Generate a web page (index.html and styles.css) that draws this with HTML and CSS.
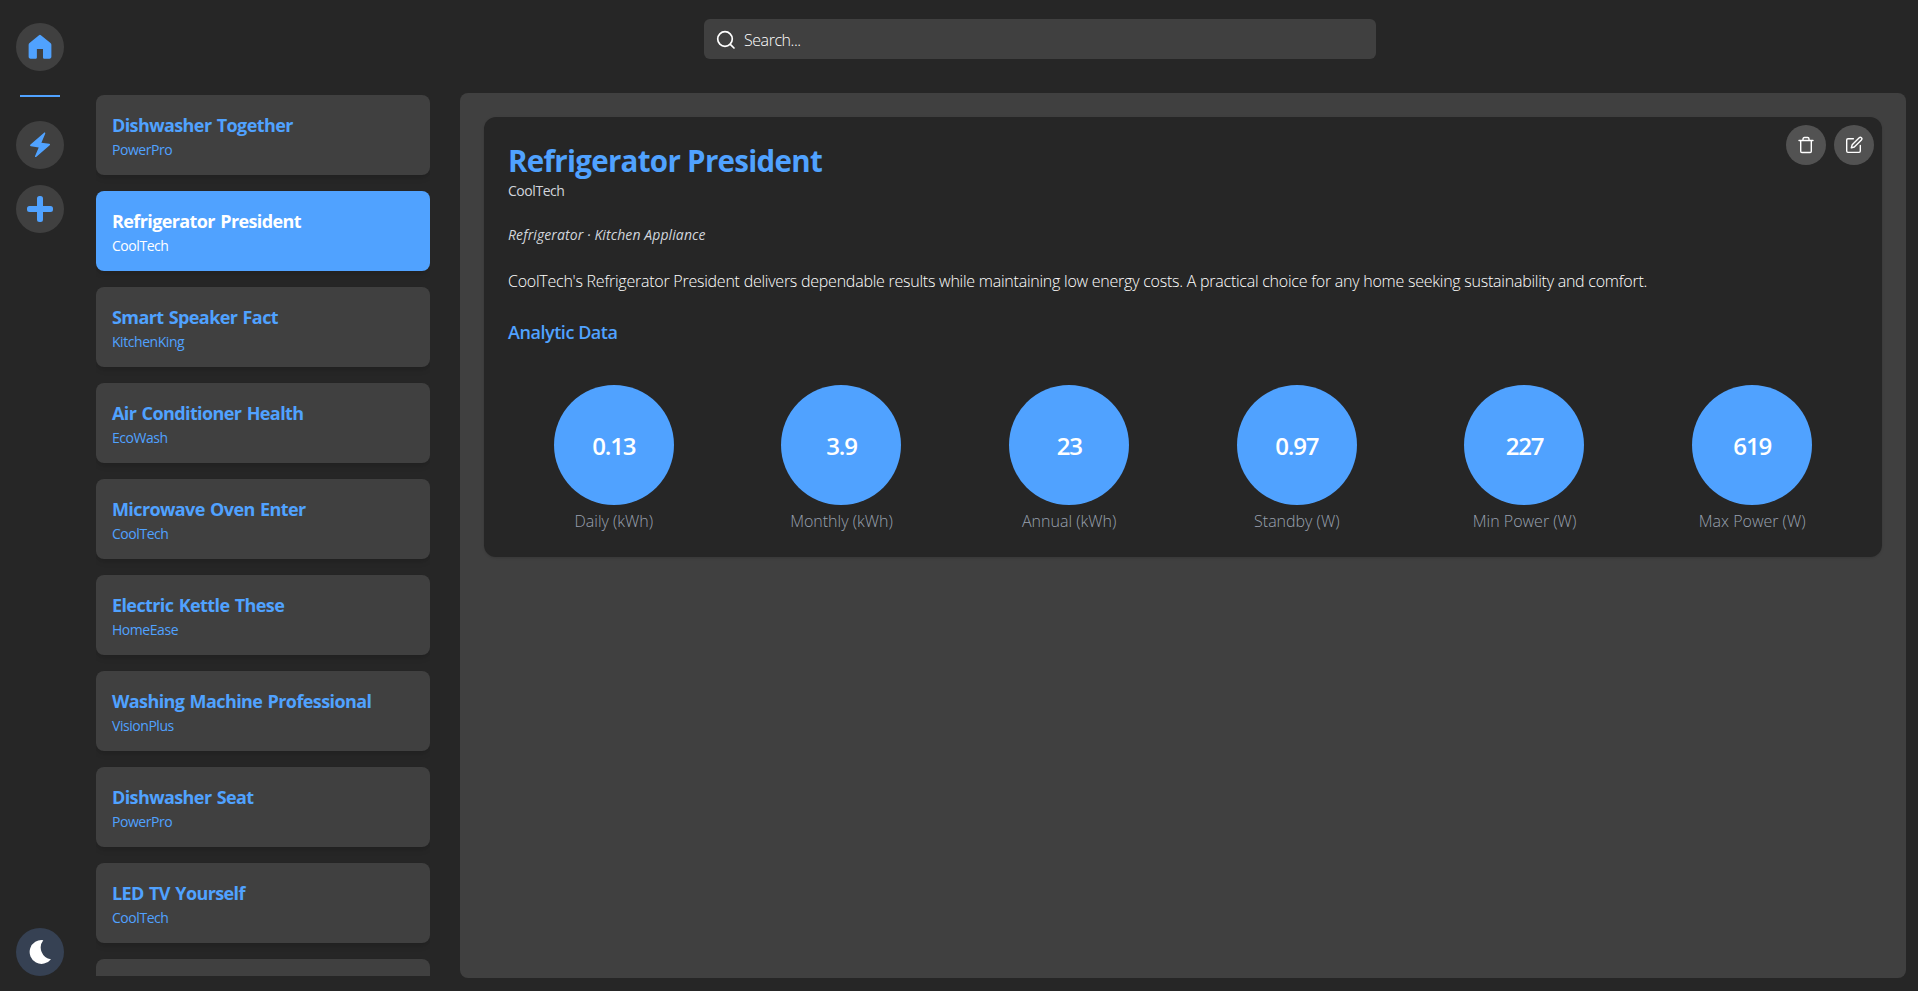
FILE: index.html
```html
<!DOCTYPE html>
<html lang="en">
<head>
<meta charset="utf-8">
<title>Appliances</title>
<link rel="stylesheet" href="styles.css">
</head>
<body>
<div class="app">
  <nav class="rail">
    <button class="rail-btn" aria-label="Home"><svg width="30" height="30" viewBox="0 0 24 24" fill="currentColor"><path d="M12.700 2.600a1.200 1.200 0 0 0-1.500 0L3.600 8.700c-.4.3-.7.9-.7 1.400v9.700c0 .9.6 1.500 1.500 1.500h3.900c.7 0 1.200-.4 1.200-1v-6.800h4.900v6.800c0 .6.5 1 1.200 1h4c.9 0 1.500-.6 1.500-1.500v-9.700c0-.5-.3-1.100-.7-1.400z"/></svg></button>
    <hr class="rail-line">
    <div class="rail-group">
      <button class="rail-btn" aria-label="Energy"><svg width="26" height="26" viewBox="0 0 26 26" fill="currentColor"><path d="M16.800.9 3.500 12.500c-.7.6-.5 1.600.4 1.700l7.800 1.200-3.600 8.500c-.4 1.100.5 1.600 1.300.9l13.300-11.500c.7-.6.4-1.500-.4-1.600l-7.900-.9 3.800-9c.4-1.100-.6-1.600-1.400-.9z"/></svg></button>
      <button class="rail-btn" aria-label="Add"><svg width="26" height="26" viewBox="0 0 26 26" fill="currentColor"><path d="M10 2.500A2.500 2.500 0 0 1 12.500 0h1A2.500 2.500 0 0 1 16 2.500V10h7.500a2.500 2.500 0 0 1 2.500 2.500v1a2.500 2.500 0 0 1-2.500 2.500H16v7.500a2.500 2.500 0 0 1-2.500 2.500h-1a2.500 2.500 0 0 1-2.500-2.500V16H2.500A2.500 2.500 0 0 1 0 13.500v-1A2.500 2.500 0 0 1 2.500 10H10z"/></svg></button>
    </div>
    <button class="rail-btn theme" aria-label="Theme"><svg width="24" height="24" viewBox="0 0 24 24" fill="currentColor"><path d="M15.300.2A11.900 11.900 0 1 0 23 19.200 11.800 11.800 0 0 1 15.300.2z"/></svg></button>
  </nav>
  <div class="content">
    <header class="top">
      <label class="search"><svg width="20" height="20" viewBox="0 0 20 20" fill="none" stroke="currentColor" stroke-width="1.7" stroke-linecap="round"><circle cx="9" cy="9" r="7.3"/><path d="m14.300 14.300 3.700 3.700"/></svg><span>Search...</span></label>
    </header>
    <div class="columns">
      <ul class="list">
        <li class="item"><h3>Dishwasher Together</h3><p>PowerPro</p></li>
        <li class="item active"><h3>Refrigerator President</h3><p>CoolTech</p></li>
        <li class="item"><h3>Smart Speaker Fact</h3><p>KitchenKing</p></li>
        <li class="item"><h3>Air Conditioner Health</h3><p>EcoWash</p></li>
        <li class="item"><h3>Microwave Oven Enter</h3><p>CoolTech</p></li>
        <li class="item"><h3>Electric Kettle These</h3><p>HomeEase</p></li>
        <li class="item"><h3>Washing Machine Professional</h3><p>VisionPlus</p></li>
        <li class="item"><h3>Dishwasher Seat</h3><p>PowerPro</p></li>
        <li class="item"><h3>LED TV Yourself</h3><p>CoolTech</p></li>
        <li class="item"></li>
      </ul>
      <main class="panel">
        <article class="card">
          <div class="actions">
            <button class="action" aria-label="Delete"><svg width="18" height="18" viewBox="0 0 18 18" fill="none" stroke="currentColor" stroke-width="1.4" stroke-linecap="round" stroke-linejoin="round"><path d="M2 4.500h14M3.700 4.500v10.800c0 .8.500 1.200 1.200 1.200h8.200c.7 0 1.200-.4 1.200-1.200V4.500M6 4.300V3c0-.8.600-1.500 1.400-1.500h3.200c.8 0 1.400.7 1.400 1.500v1.300"/></svg></button>
            <button class="action" aria-label="Edit"><svg width="18" height="18" viewBox="0 0 18 18" fill="none" stroke="currentColor" stroke-width="1.4" stroke-linecap="round" stroke-linejoin="round"><path d="M8.400 2.800H3c-.8 0-1.300.5-1.300 1.300v11c0 .8.500 1.300 1.300 1.300h11c.8 0 1.300-.5 1.300-1.300V9.500M14.200 1.700a1.500 1.500 0 0 1 2.200 2.200L9.300 11l-3 .9.900-3.100z"/></svg></button>
          </div>
          <h1>Refrigerator President</h1>
          <p class="brand">CoolTech</p>
          <p class="kind">Refrigerator · Kitchen Appliance</p>
          <p class="desc">CoolTech's Refrigerator President delivers dependable results while maintaining low energy costs. A practical choice for any home seeking sustainability and comfort.</p>
          <h2>Analytic Data</h2>
          <div class="stats">
            <div class="stat"><b>0.13</b><span>Daily (kWh)</span></div>
            <div class="stat"><b>3.9</b><span>Monthly (kWh)</span></div>
            <div class="stat"><b>23</b><span>Annual (kWh)</span></div>
            <div class="stat"><b>0.97</b><span>Standby (W)</span></div>
            <div class="stat"><b>227</b><span>Min Power (W)</span></div>
            <div class="stat"><b>619</b><span>Max Power (W)</span></div>
          </div>
        </article>
      </main>
    </div>
  </div>
</div>
</body>
</html>
```
FILE: styles.css
```css
* { box-sizing: border-box; margin: 0; padding: 0; }
body { height: 991px; overflow: hidden; background: #262626; color: #fff; font-family: "Open Sans", "Noto Sans", sans-serif; font-size: 16px; line-height: 24px; }
button { border: 0; font: inherit; color: inherit; }
svg { display: block; flex: none; }
.app { display: flex; height: 991px; }
.rail { width: 80px; padding: 23px 16px 15px; display: flex; flex-direction: column; align-items: center; }
.rail-btn { width: 48px; height: 48px; border-radius: 50%; background: #404040; color: #50a2ff; display: flex; align-items: center; justify-content: center; }
.rail-line { width: 40px; height: 2px; border: 0; background: #50a2ff; margin: 24px 0; }
.rail-group { flex: 1; display: flex; flex-direction: column; gap: 16px; }
.theme { background: #364153; color: #fff; }
.content { flex: 1; min-width: 0; display: flex; flex-direction: column; padding: 19px 12px 13px 16px; }
.top { display: flex; justify-content: center; height: 74px; padding-left: 74px; margin-right: -4px; }
.search { width: 672px; height: 40px; border-radius: 6px; background: #404040; display: flex; align-items: center; gap: 8px; padding: 1px 12px 0; font-weight: 300; letter-spacing: -0.45px; }
.columns { flex: 1; min-height: 0; display: flex; gap: 30px; }
.list { width: 334px; margin: 2px 0; list-style: none; overflow: hidden; display: flex; flex-direction: column; gap: 16px; }
.item { flex: none; height: 80px; border-radius: 8px; padding: 16px; background: #404040; color: #50a2ff; box-shadow: 0 4px 6px -1px rgba(0,0,0,.1), 0 2px 4px -2px rgba(0,0,0,.1); }
.item h3 { font-size: 18px; line-height: 28px; font-weight: 700; letter-spacing: -0.6px; word-spacing: 1.2px; }
.item p { font-size: 14px; line-height: 21px; letter-spacing: -0.45px; }
.active { background: #50a2ff; color: #fff; }
.panel { flex: 1; min-width: 0; background: #404040; border-radius: 8px; padding: 24px; }
.card { position: relative; height: 440px; background: #262626; border-radius: 12px; padding: 24px; box-shadow: 0 1px 3px rgba(0,0,0,.1), 0 1px 2px -1px rgba(0,0,0,.1); }
.actions { position: absolute; top: 8px; right: 8px; display: flex; gap: 8px; }
.action { width: 40px; height: 40px; border-radius: 50%; background: #525252; color: #fff; display: flex; align-items: center; justify-content: center; }
h1 { font-size: 29.5px; line-height: 40px; font-weight: 700; letter-spacing: -0.7px; color: #50a2ff; }
.brand, .kind { font-size: 14px; line-height: 20px; color: #d1d5dc; letter-spacing: -0.45px; }
.kind { font-style: italic; margin-top: 24px; letter-spacing: 0.1px; }
.desc { margin-top: 24px; white-space: nowrap; font-weight: 300; letter-spacing: -0.24px; }
h2 { margin-top: 25px; font-size: 18px; line-height: 28px; font-weight: 600; color: #50a2ff; letter-spacing: -0.45px; }
.stats { display: grid; grid-template-columns: repeat(6, 1fr); gap: 16px; margin-top: 39px; }
.stat { display: flex; flex-direction: column; align-items: center; gap: 4px; }
.stat b { width: 120px; height: 120px; border-radius: 50%; background: #50a2ff; display: flex; align-items: center; justify-content: center; padding-top: 2px; font-size: 24px; font-weight: 600; letter-spacing: -1.2px; }
.stat span { font-weight: 300; color: #99a1af; }
```
